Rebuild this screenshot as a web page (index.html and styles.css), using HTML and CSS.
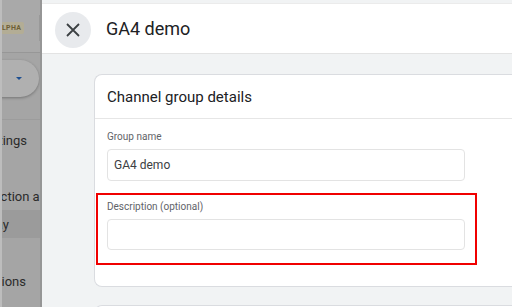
FILE: index.html
```html
<!DOCTYPE html>
<html lang="en">
<head>
    <meta charset="UTF-8">
    <meta name="viewport" content="width=device-width, initial-scale=1.0">
    <title>GA4 demo - Channel group</title>
    <link rel="stylesheet" href="styles.css">
</head>
<body>
    <aside class="sidebar">
        <div class="side-top">
            <span class="badge">ALPHA</span>
            <span class="side-divider"></span>
        </div>
        <div class="side-pill">
            <span class="pill-arrow"></span>
        </div>
        <ul class="side-nav">
            <li class="nav-item item-settings"><span>Property settings</span></li>
            <li class="nav-item item-collection"><span>Data collection and modification</span></li>
            <li class="nav-item item-display active"><span>Data display</span></li>
            <li class="nav-item item-definitions"><span>Custom definitions</span></li>
        </ul>
    </aside>
    <main class="panel">
        <header class="panel-header">
            <button class="close-btn" aria-label="Close">
                <svg width="14" height="14" viewBox="0 0 14 14"><path d="M1 1L13 13M13 1L1 13" stroke="#3c4043" stroke-width="1.8" fill="none"/></svg>
            </button>
            <h1>GA4 demo</h1>
        </header>
        <div class="content">
            <section class="card">
                <div class="card-head">Channel group details</div>
                <div class="card-body">
                    <label class="field-label">Group name</label>
                    <div class="field-input">GA4 demo</div>
                    <div class="highlight">
                        <label class="field-label">Description (optional)</label>
                        <div class="field-input empty"></div>
                    </div>
                </div>
            </section>
            <section class="card next-card"></section>
        </div>
    </main>
</body>
</html>
```

FILE: styles.css
```css
html {
    overflow: hidden;
}
body {
    font-family: Roboto, "Liberation Sans", Arial, sans-serif;
    margin: 0;
    width: 512px;
    height: 307px;
    overflow: hidden;
    display: flex;
    background-color: #f1f3f4;
    color: #202124;
}
.sidebar {
    width: 38px;
    flex-shrink: 0;
    background-color: #a5a5a5;
    border-left: 2px solid #bdbdbd;
    border-right: 2px solid #969696;
    overflow: hidden;
    color: #2b2b2b;
}
.side-top {
    height: 52px;
    border-bottom: 1px solid #979797;
    display: flex;
    align-items: center;
    justify-content: space-between;
    background-color: #a9a9a9;
}
.badge {
    margin-left: -8px;
    margin-top: 4px;
    background-color: #b3ad95;
    color: #6e5f35;
    font-size: 7px;
    font-weight: bold;
    letter-spacing: 0.3px;
    padding: 2px 3px;
    border-radius: 2px;
}
.side-divider {
    width: 1px;
    height: 26px;
    background-color: #999;
    margin-top: 4px;
}
.side-pill {
    margin-top: 7px;
    margin-left: -2px;
    width: 39px;
    height: 37px;
    border-radius: 0 19px 19px 0;
    background-color: #b0b0b0;
    box-shadow: 0 1px 3px rgba(0, 0, 0, 0.3);
    display: flex;
    align-items: center;
    padding-left: 16px;
    box-sizing: border-box;
}
.pill-arrow {
    width: 0;
    height: 0;
    border-left: 3px solid transparent;
    border-right: 3px solid transparent;
    border-top: 3px solid #1d4f91;
}
.side-nav {
    list-style: none;
    margin: 0;
    padding: 0;
    margin-top: 22px;
    border-top: 1px solid #9c9c9c;
    font-size: 13px;
}
.nav-item {
    display: flex;
    justify-content: flex-end;
    white-space: nowrap;
    height: 28px;
    align-items: center;
}
.item-settings {
    margin-top: 6px;
    padding-right: 13px;
}
.item-collection {
    margin-top: 28px;
    justify-content: flex-start;
}
.item-collection span {
    margin-left: -59px;
}
.item-display {
    margin-top: 0;
    padding-right: 31px;
}
.active {
    background-color: #9b9b9b;
}
.item-definitions {
    margin-top: 29px;
    padding-right: 14px;
}
.panel {
    flex: 1;
    padding-top: 3px;
    display: flex;
    flex-direction: column;
    overflow: hidden;
}
.panel-header {
    flex-shrink: 0;
    height: 49px;
    background-color: #fff;
    border-top: 1px solid #ebebeb;
    border-bottom: 1px solid #e3e3e3;
    display: flex;
    align-items: center;
    padding-left: 13px;
}
.close-btn {
    width: 36px;
    height: 36px;
    border-radius: 50%;
    border: none;
    background-color: #e8eaed;
    display: flex;
    align-items: center;
    justify-content: center;
    padding: 0;
    margin-top: 3px;
}
.panel-header h1 {
    font-size: 18px;
    font-weight: normal;
    margin: 0 0 0 15px;
    color: #202124;
}
.content {
    padding: 20px 0 0 52px;
}
.card {
    background-color: #fff;
    border: 1px solid #dadce0;
    border-right: none;
    border-radius: 8px 0 0 8px;
    margin-right: -4px;
}
.card-head {
    height: 43px;
    border-bottom: 1px solid #e6e6e6;
    display: flex;
    align-items: center;
    padding-left: 12px;
    font-size: 15px;
    color: #202124;
}
.card-body {
    padding: 12px 0 21px 12px;
}
.field-label {
    display: block;
    font-size: 10px;
    line-height: 12px;
    color: #5f6368;
}
.field-input {
    margin-top: 6px;
    width: 350px;
    height: 30px;
    border: 1px solid #e3e3e3;
    border-radius: 4px;
    display: flex;
    align-items: center;
    padding-left: 6px;
    font-size: 12px;
    color: #3c4043;
}
.highlight {
    margin: 12px 0 0 -11px;
    width: 368px;
    border: 2px solid #f00000;
    padding: 6px 0 13px 9px;
}
.highlight .field-input {
    height: 29px;
}
.next-card {
    margin-top: 18px;
    height: 20px;
}
```
